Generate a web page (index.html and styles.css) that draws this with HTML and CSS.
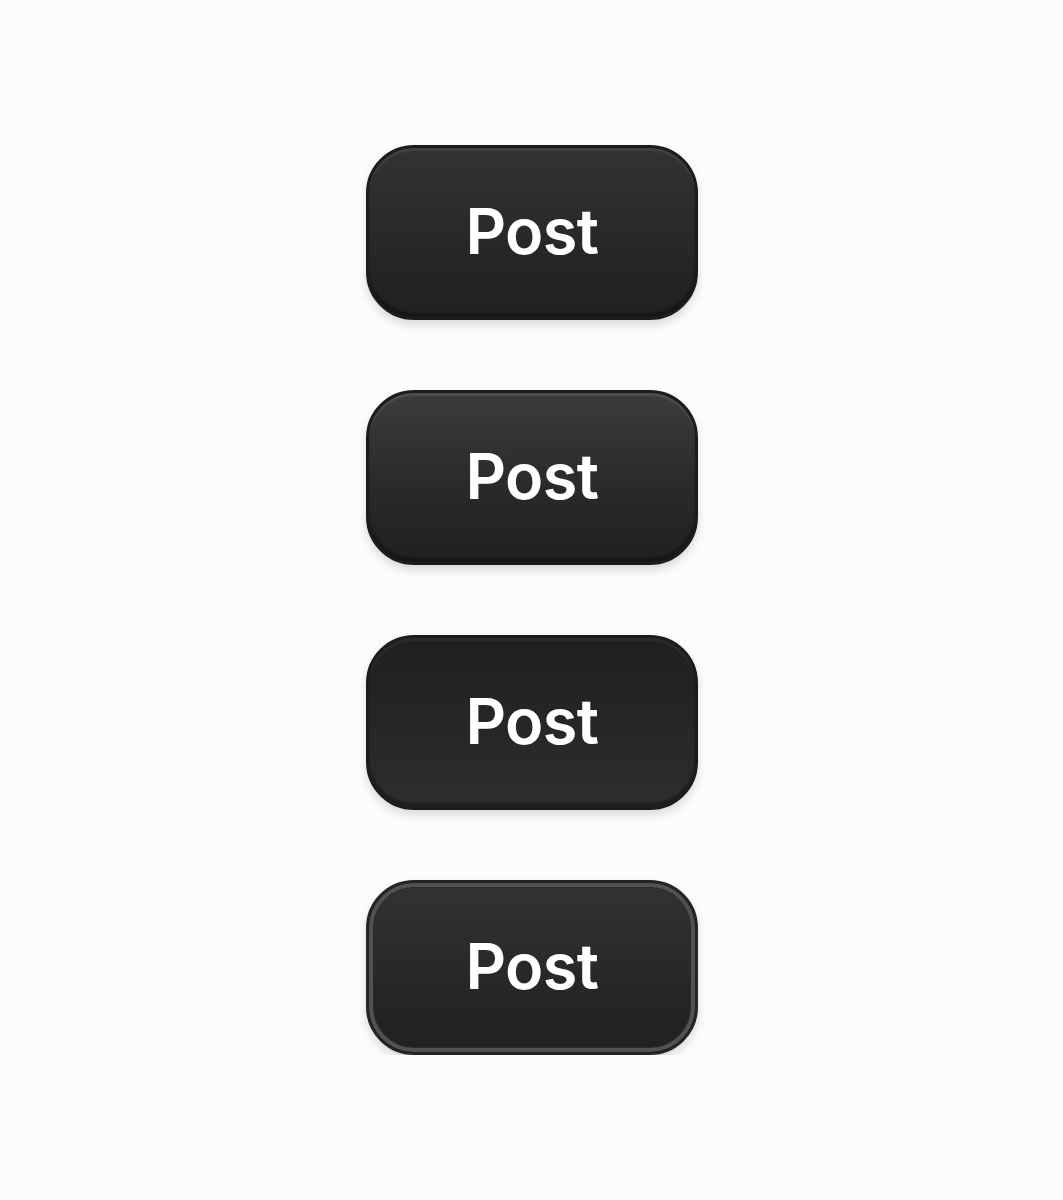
FILE: index.html
```html
<!DOCTYPE html>
<html>
<head>
<meta charset="utf-8">
<link rel="stylesheet" href="styles.css">
</head>
<body>
<main class="stack">
  <button class="btn btn-a">Post</button>
  <button class="btn btn-b">Post</button>
  <button class="btn btn-c">Post</button>
  <button class="btn btn-d">Post</button>
</main>
</body>
</html>
```
FILE: styles.css
```css
html, body {
  margin: 0;
  padding: 0;
  background: #fcfcfc;
}
.stack {
  display: flex;
  flex-direction: column;
  align-items: center;
  gap: 70px;
  padding-top: 145px;
  padding-left: 1px;
}
.btn {
  box-sizing: border-box;
  width: 332px;
  height: 175px;
  border-radius: 48px;
  border: 3px solid #1c1c1c;
  color: #fff;
  font-family: Inter, "Noto Sans", sans-serif;
  font-weight: 600;
  font-size: 63px;
  letter-spacing: -0.6px;
  line-height: 1;
  padding: 0 0 2px 0;
  display: flex;
  align-items: center;
  justify-content: center;
  cursor: pointer;
}
.btn-a {
  background: linear-gradient(180deg, #333333 0%, #272727 60%, #212121 100%);
  box-shadow: inset 0 3px 1px rgba(255,255,255,0.07), inset 0 -4px 2px rgba(0,0,0,0.35), 0 5px 10px rgba(0,0,0,0.14);
}
.btn-b {
  background: linear-gradient(180deg, #3c3c3c 0%, #2a2a2a 55%, #202020 100%);
  box-shadow: inset 0 3px 1px rgba(255,255,255,0.09), inset 0 -4px 2px rgba(0,0,0,0.35), 0 5px 10px rgba(0,0,0,0.14);
}
.btn-c {
  background: linear-gradient(180deg, #202020 0%, #262626 50%, #2e2e2e 100%);
  box-shadow: inset 0 3px 1px rgba(255,255,255,0.05), inset 0 -4px 2px rgba(0,0,0,0.35), 0 5px 10px rgba(0,0,0,0.14);
}
.btn-d {
  border: 3px solid #242424;
  background: linear-gradient(180deg, #333333 0%, #272727 60%, #212121 100%);
  box-shadow: inset 0 0 0 4px #515151, inset 0 0 0 5px #2c2c2c, 0 5px 10px rgba(0,0,0,0.14);
}
```
